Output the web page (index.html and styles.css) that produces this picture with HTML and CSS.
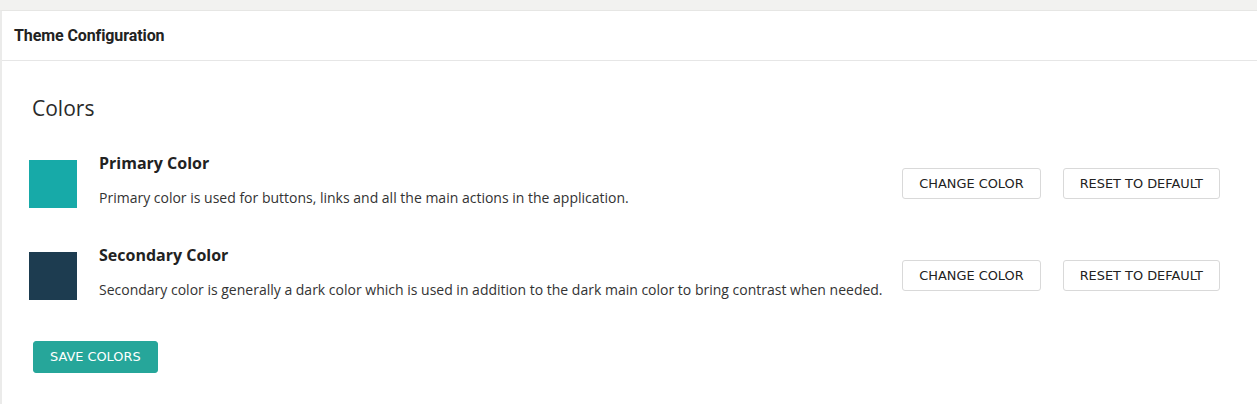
FILE: index.html
```html
<!DOCTYPE html>
<html lang="en">
<head>
<meta charset="utf-8">
<title>Theme Configuration</title>
<link rel="stylesheet" href="styles.css">
</head>
<body>
  <div class="card">
    <div class="card-header">
      <h1 class="card-title">Theme Configuration</h1>
    </div>
    <div class="card-body">
      <h2 class="section-title">Colors</h2>

      <div class="color-row">
        <div class="swatch swatch-primary"></div>
        <div class="color-info">
          <h3 class="color-name">Primary Color</h3>
          <p class="color-desc">Primary color is used for buttons, links and all the main actions in the application.</p>
        </div>
        <div class="color-actions">
          <button class="btn btn-outline">CHANGE COLOR</button>
          <button class="btn btn-outline">RESET TO DEFAULT</button>
        </div>
      </div>

      <div class="color-row">
        <div class="swatch swatch-secondary"></div>
        <div class="color-info">
          <h3 class="color-name">Secondary Color</h3>
          <p class="color-desc">Secondary color is generally a dark color which is used in addition to the dark main color to bring contrast when needed.</p>
        </div>
        <div class="color-actions">
          <button class="btn btn-outline">CHANGE COLOR</button>
          <button class="btn btn-outline">RESET TO DEFAULT</button>
        </div>
      </div>

      <div class="form-actions">
        <button class="btn btn-primary">SAVE COLORS</button>
      </div>
    </div>
  </div>
</body>
</html>
```

FILE: styles.css
```css
* {
  box-sizing: border-box;
}

html, body {
  margin: 0;
  padding: 0;
}

body {
  background: #f2f2f0;
  padding-top: 10px;
  font-family: "Open Sans", "Liberation Sans", sans-serif;
  color: #333;
  height: 404px;
  overflow: hidden;
}

.card {
  background: #fff;
  border-top: 1px solid #e6e6e4;
  border-left: 2px solid #ebebea;
  min-height: 394px;
}

.card-header {
  height: 50px;
  display: flex;
  align-items: center;
  padding-left: 12px;
  border-bottom: 1px solid #e6e6e6;
}

.card-title {
  margin: 0;
  font-family: Roboto, "Liberation Sans", sans-serif;
  font-weight: 700;
  font-size: 16px;
  line-height: 20px;
  color: #222;
  letter-spacing: -0.1px;
}

.card-body {
  padding: 33px 37px 20px 27px;
}

.section-title {
  margin: 0 0 29px 3px;
  font-weight: 400;
  font-size: 21px;
  line-height: 28px;
  color: #2a2a2a;
}

.color-row {
  display: flex;
  align-items: center;
  margin-bottom: 27px;
}

.swatch {
  width: 48px;
  height: 48px;
  flex: none;
}

.swatch-primary {
  background: #17aaa8;
}

.swatch-secondary {
  background: #1d3c50;
}

.color-info {
  flex: 1;
  padding-left: 22px;
  padding-bottom: 8px;
  min-width: 0;
}

.color-name {
  margin: 0 0 13px;
  font-weight: 700;
  font-size: 16px;
  line-height: 24px;
  color: #222;
}

.color-desc {
  margin: 0;
  font-size: 14px;
  line-height: 20px;
  color: #333;
  white-space: nowrap;
}

.color-actions {
  display: flex;
  gap: 22px;
  flex: none;
  padding-left: 22px;
}

.btn {
  font-family: "DejaVu Sans", Verdana, sans-serif;
  font-size: 12.9px;
  height: 31px;
  border-radius: 3px;
  cursor: pointer;
  padding: 0 16px;
  line-height: 29px;
}

.btn-outline {
  background: #fff;
  color: #222;
  border: 1px solid #d9d9d9;
}

.form-actions {
  display: flex;
  padding-left: 4px;
  margin-top: 33px;
}

.btn-primary {
  background: #26a69a;
  color: #fff;
  border: 1px solid #26a69a;
  height: 32px;
  line-height: 30px;
  padding: 0 16px;
  border-radius: 3px;
}
```
